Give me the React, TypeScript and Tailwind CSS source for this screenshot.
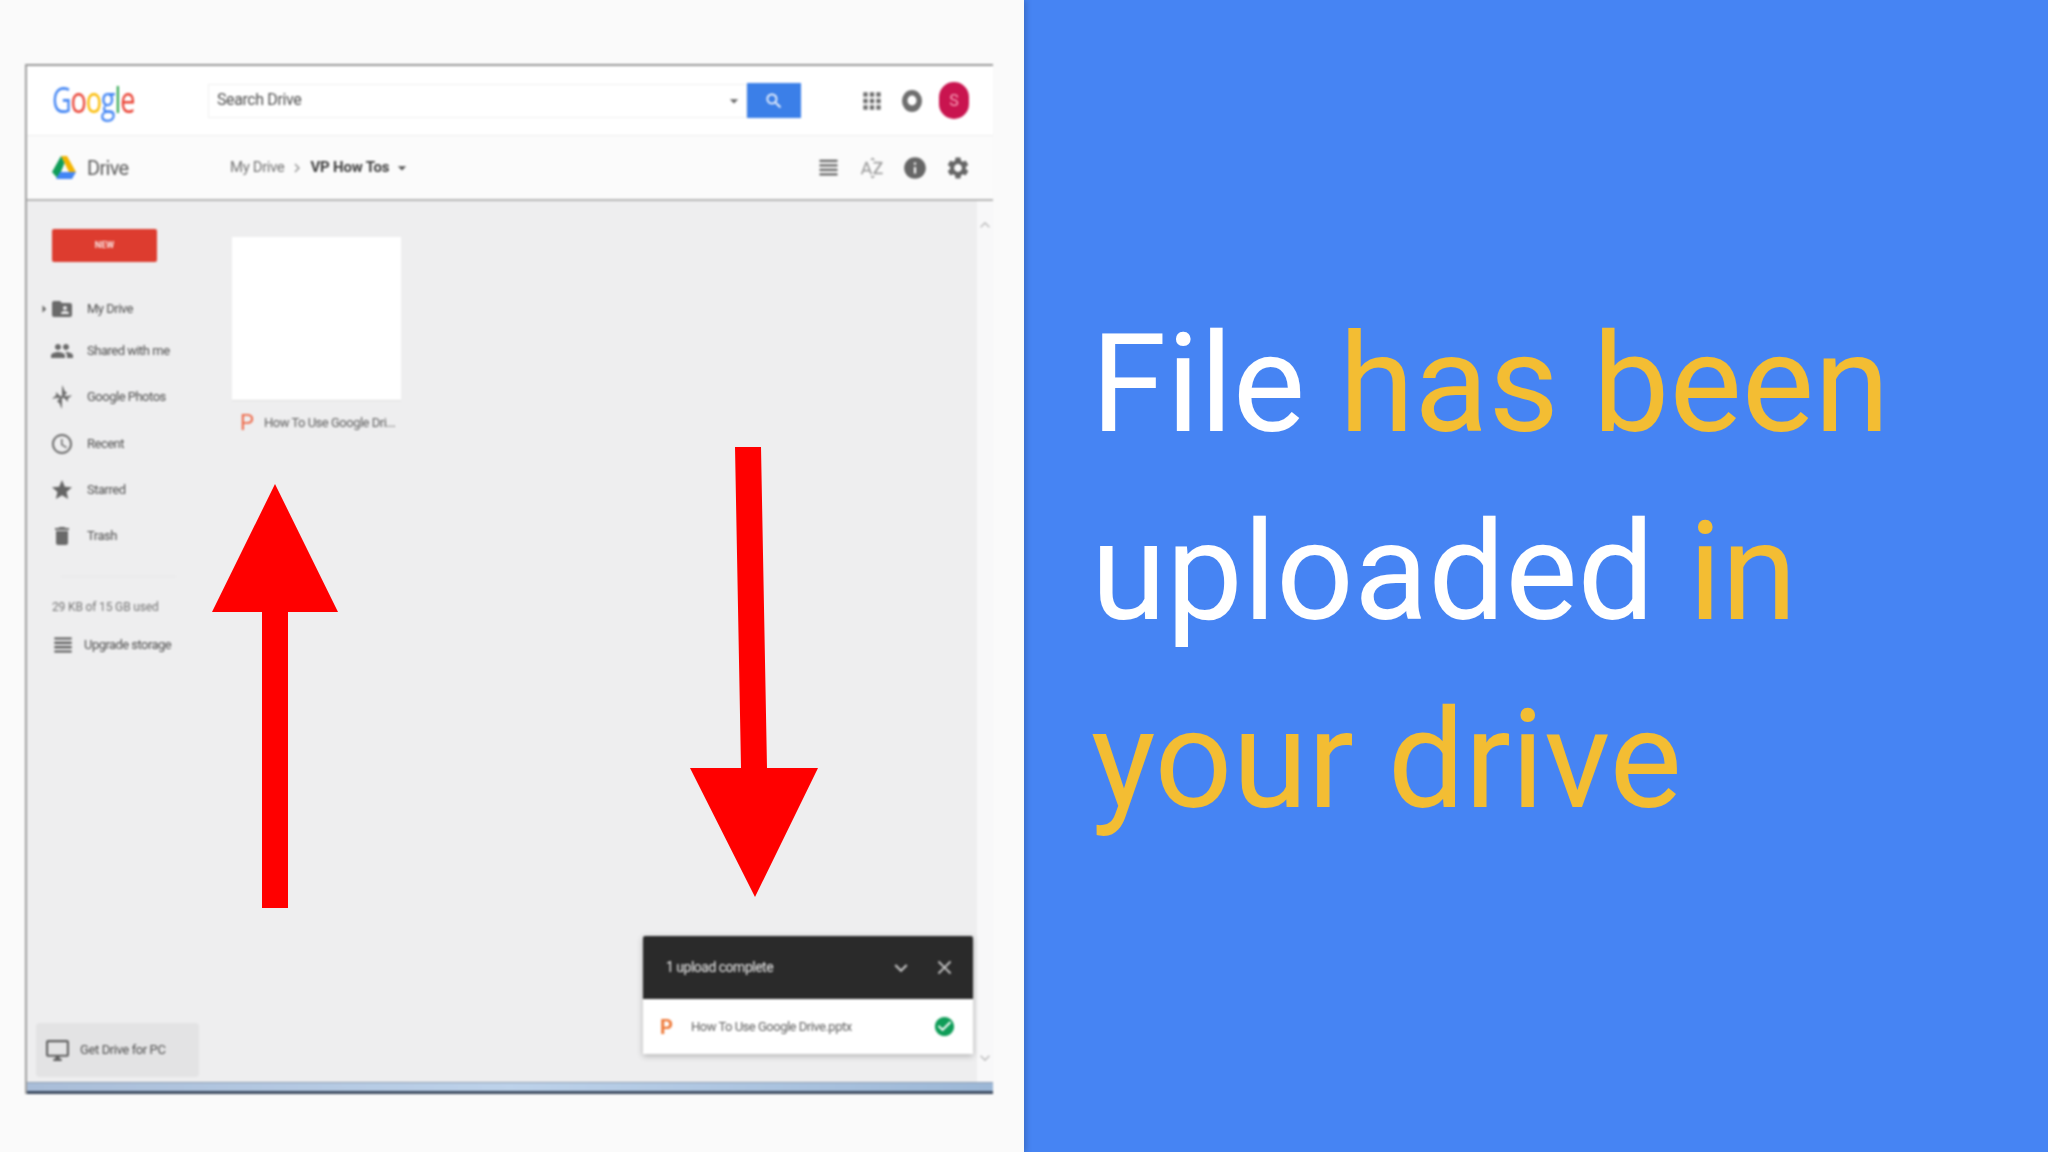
import React from "react";
import {
  MdApps, MdViewHeadline, MdInfo, MdSettings, MdPeople, MdStar, MdDelete, MdAccessTime,
  MdOutlineDesktopWindows, MdCheckCircle, MdClose, MdExpandMore, MdExpandLess, MdSearch, MdArrowDropDown,
  MdArrowRight, MdFolderShared, MdChevronRight, MdSortByAlpha,
} from "react-icons/md";

const Photos = () => (
  <svg width="22" height="26" viewBox="0 0 22 26" fill="#6f6f6f">
    <path d="M11 1l2 4v7h-2zM21 11l-3 3h-7v-2h6zM11 25l-2-4v-7h2zM1 15l3-3h7v2H5z" />
    <path d="M13 6l3 3-3 3zM9 20l-3-3 3-3zM5 8l4 4H5zM17 18l-4-4h4z" />
  </svg>
);

const DriveLogo = () => (
  <svg width="24" height="26" viewBox="0 0 24 26">
    <path d="M9 1h6l9 16h-7z" fill="#f4b400" />
    <path d="M9 1l3.5 7L6 24 0 17z" fill="#0f9d58" />
    <path d="M8 17h16l-4 7H4z" fill="#4285f4" />
  </svg>
);

const Bell = () => (
  <svg width="22" height="26" viewBox="0 0 22 26">
    <ellipse cx="11" cy="13" rx="10" ry="11" fill="#6e6e6e" />
    <ellipse cx="11" cy="12.5" rx="4.5" ry="5" fill="#fff" />
  </svg>
);

const Row = ({ icon, label, h }: { icon: React.ReactNode; label: string; h: string }) => (
  <div className={`flex items-center ${h}`}>
    <div className="w-[24px] flex justify-center ml-[23px] mr-[13px]">{icon}</div>
    <span className="text-[13px] tracking-[-0.5px] text-[#505050]">{label}</span>
  </div>
);

export default function App() {
  return (
    <div className="flex w-[2048px] h-[1152px] overflow-hidden font-['Roboto',sans-serif]">
      <div className="relative w-[1024px] h-full bg-[#fafafa] pt-[64px] pl-[25px] shadow-[2px_0_6px_rgba(0,0,0,0.2)] z-10">
        <div className="w-[968px] h-[1030px] flex flex-col border-t-2 border-l-2 border-t-[#999999] border-l-[#a0a0a0] blur-[0.8px]">
          <header className="h-[70px] shrink-0 flex items-center bg-white border-b border-[#eeeeee]">
            <div className="w-[181px] pl-[25px] pb-[4px]">
              <div className="origin-left scale-x-[0.73] text-[37px] leading-none tracking-[-1.5px] font-['Open_Sans',sans-serif]">
                <span className="text-[#4285f4]">G</span><span className="text-[#ea4335]">o</span><span className="text-[#fbbc05]">o</span><span className="text-[#4285f4]">g</span><span className="text-[#34a853]">l</span><span className="text-[#ea4335]">e</span>
              </div>
            </div>
            <div className="w-[539px] h-[34px] flex items-center justify-between pl-[8px] pr-[2px] bg-white border border-[#f0f0f0]">
              <span className="text-[16px] tracking-[-0.4px] text-[#505050] -translate-y-px">Search Drive</span>
              <MdArrowDropDown size={20} color="#666" />
            </div>
            <div className="w-[54px] h-[35px] flex items-center justify-center bg-[#3b7fe8]">
              <MdSearch size={20} color="#fff" />
            </div>
            <div className="flex items-center ml-[58px] gap-[16px]">
              <MdApps size={26} color="#6e6e6e" />
              <Bell />
              <div className="w-[30px] h-[37px] rounded-full bg-[#c9144f] flex items-center justify-center text-[16px] text-[#f8a0b8]">S</div>
            </div>
          </header>
          <div className="h-[65px] shrink-0 flex items-center bg-[#fbfbfb] border-b-2 border-[#b5b5b5]">
            <div className="ml-[25px]"><DriveLogo /></div>
            <span className="ml-[11px] w-[143px] text-[20px] tracking-[-0.7px] text-[#5c5c5c]">Drive</span>
            <span className="text-[15px] tracking-[-0.4px] text-[#757575]">My Drive</span>
            <MdChevronRight size={18} color="#999" className="mx-[4px]" />
            <span className="text-[15px] font-bold tracking-[-0.2px] text-[#404040]">VP How Tos</span>
            <MdArrowDropDown size={20} color="#555" className="ml-[3px]" />
            <div className="ml-auto flex items-center mr-[22px] gap-[17px]">
              <MdViewHeadline size={27} color="#666" />
              <MdSortByAlpha size={26} color="#a0a0a0" />
              <MdInfo size={26} color="#666" />
              <MdSettings size={26} color="#666" />
            </div>
          </div>
          <div className="relative flex-1 flex bg-[#eeeeef] min-h-0">
            <aside className="relative w-[205px] shrink-0 pt-[28px]">
              <div className="ml-[25px] w-[105px] h-[33px] rounded-[2px] bg-[#dd3c2f] flex items-center justify-center text-[9px] font-bold text-[#fbe6e3]">NEW</div>
              <div className="mt-[26px]">
                <div className="relative">
                  <MdArrowRight size={18} color="#666" className="absolute left-[8px] top-[12px]" />
                  <Row h="h-[41px]" label="My Drive" icon={<MdFolderShared size={24} color="#6a6a6a" />} />
                </div>
                <Row h="h-[44px]" label="Shared with me" icon={<MdPeople size={24} color="#6a6a6a" />} />
                <Row h="h-[48px]" label="Google Photos" icon={<Photos />} />
                <Row h="h-[46px]" label="Recent" icon={<MdAccessTime size={24} color="#6a6a6a" />} />
                <Row h="h-[46px]" label="Starred" icon={<MdStar size={26} color="#666" />} />
                <Row h="h-[46px]" label="Trash" icon={<MdDelete size={26} color="#6a6a6a" />} />
              </div>
              <div className="ml-[34px] mt-[17px] w-[115px] border-t border-[#e8e8e8]" />
              <div className="ml-[25px] mt-[21px] text-[12px] tracking-[-0.15px] text-[#757575]">29 KB of 15 GB used</div>
              <div className="flex items-center mt-[16px] ml-[23px]">
                <MdViewHeadline size={26} color="#555" />
                <span className="ml-[8px] text-[13px] tracking-[-0.55px] text-[#505050]">Upgrade storage</span>
              </div>
              <div className="absolute left-[9px] bottom-[5px] w-[163px] h-[54px] rounded-[4px] bg-[#e3e3e4] flex items-center pl-[9px]">
                <MdOutlineDesktopWindows size={25} color="#5f5f5f" />
                <span className="ml-[10px] text-[13px] tracking-[-0.4px] text-[#505050]">Get Drive for PC</span>
              </div>
            </aside>
            <main className="flex-1 pt-[36px]">
              <div className="w-[169px]">
                <div className="h-[164px] bg-white border-b border-[#dddddd]" />
                <div className="flex items-center mt-[11px] pl-[8px]">
                  <span className="w-[24px] text-[22px] leading-none text-[#ee6a4a]">P</span>
                  <span className="text-[13px] tracking-[-0.5px] text-[#606060] whitespace-nowrap">How To Use Google Dri...</span>
                </div>
              </div>
            </main>
            <div className="w-[16px] shrink-0 bg-[#f8f8f9] flex flex-col items-center justify-between pt-[14px] pb-[14px]">
              <MdExpandLess size={20} color="#c0c0c0" />
              <MdExpandMore size={20} color="#c0c0c0" />
            </div>
            <div className="absolute left-[616px] top-[735px] w-[330px] shadow-[0_2px_6px_rgba(0,0,0,0.25)]">
              <div className="h-[63px] bg-[#2a2a2a] rounded-t-[2px] flex items-center pl-[23px] pr-[17px]">
                <span className="text-[14px] tracking-[-0.5px] text-[#ececec]">1 upload complete</span>
                <MdExpandMore size={26} color="#c4c4c4" className="ml-auto" />
                <MdClose size={23} color="#c4c4c4" className="ml-[19px]" />
              </div>
              <div className="h-[55px] bg-white flex items-center pl-[17px] pr-[17px]">
                <span className="w-[31px] text-[20px] leading-none font-bold text-[#ee7a3a]">P</span>
                <span className="text-[13px] tracking-[-0.5px] text-[#606060]">How To Use Google Drive.pptx</span>
                <MdCheckCircle size={23} color="#0f9d58" className="ml-auto" />
              </div>
            </div>
          </div>
          <div className="h-[12px] shrink-0 bg-gradient-to-r from-[#a9bdd8] via-[#bdd2ea] to-[#9cb7d6] border-t border-[#8a9bb0] border-b-[3px] border-b-[#3c4b60]" />
        </div>

        <svg className="absolute left-[210px] top-[482px]" width="132" height="428" viewBox="0 0 132 428">
          <polygon points="65,2 128,130 78,130 78,426 52,426 52,130 2,130" fill="#ff0000" />
        </svg>
        <svg className="absolute left-[688px] top-[446px]" width="132" height="454" viewBox="0 0 132 454">
          <polygon points="47,1 73,1 79,322 130,322 67,451 2,322 53,322" fill="#ff0000" />
        </svg>
      </div>
      <div className="flex-1 bg-[#4684f3] pt-[290px] pl-[67px]">
        <p className="w-[900px] text-[136.5px] leading-[188px] text-white">
          File <span className="text-[#f3bd33]">has been</span><br />
          uploaded <span className="text-[#f3bd33]">in</span><br />
          <span className="text-[#f3bd33]">your drive</span>
        </p>
      </div>
    </div>
  );
}
